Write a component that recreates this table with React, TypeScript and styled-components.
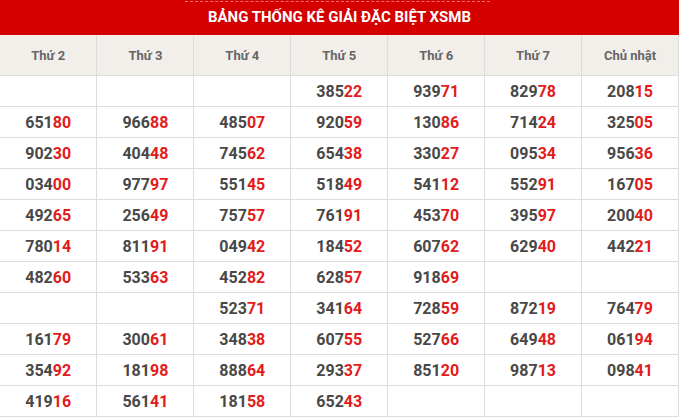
import React from 'react';
import styled, { createGlobalStyle } from 'styled-components';

/* ── page reset ─────────────────────────────────────────── */
const Global = createGlobalStyle`
  html, body { margin: 0; padding: 0; background: #fff; }
  body { font-family: Roboto, 'Liberation Sans', sans-serif; }
`;

/* ── wrappers ──────────────────────────────────────────── */
const Box = styled.section`
  width: 679px;
  background: #fff;
`;

const Title = styled.h2`
  position: relative;
  margin: 0;
  height: 35px;
  line-height: 35px;
  background: #d40000;
  color: #fff;
  font-size: 15px;
  font-weight: 700;
  text-align: center;
  text-transform: uppercase;

  &::before {
    content: '';
    position: absolute;
    top: 1px;
    left: 185px;
    width: 305px;
    border-top: 1px dashed rgba(255, 140, 140, 0.8);
  }
`;

const Table = styled.table`
  width: 679px;
  border-collapse: collapse;
  table-layout: fixed;
`;

const Head = styled.th`
  height: 40px;
  padding: 0;
  background: #f2efea;
  color: #666;
  font-size: 13px;
  font-weight: 700;
  text-align: center;
  border: 1px solid #ddd;
  border-top: 0;
  &:first-child { border-left: 0; }
`;

const Cell = styled.td`
  height: 30px;
  padding: 0;
  text-align: center;
  color: #484848;
  font-size: 16px;
  font-weight: 700;
  border: 1px solid #ddd;
  &:first-child { border-left: 0; }
`;

const Tail = styled.span`
  color: #e31b1b;
`;

/* ── data ──────────────────────────────────────────────── */
const days = ['Thứ 2', 'Thứ 3', 'Thứ 4', 'Thứ 5', 'Thứ 6', 'Thứ 7', 'Chủ nhật'];

const rows: string[][] = [
  ['', '', '', '38522', '93971', '82978', '20815'],
  ['65180', '96688', '48507', '92059', '13086', '71424', '32505'],
  ['90230', '40448', '74562', '65438', '33027', '09534', '95636'],
  ['03400', '97797', '55145', '51849', '54112', '55291', '16705'],
  ['49265', '25649', '75757', '76191', '45370', '39597', '20040'],
  ['78014', '81191', '04942', '18452', '60762', '62940', '44221'],
  ['48260', '53363', '45282', '62857', '91869', '', ''],
  ['', '', '52371', '34164', '72859', '87219', '76479'],
  ['16179', '30061', '34838', '60755', '52766', '64948', '06194'],
  ['35492', '18198', '88864', '29337', '85120', '98713', '09841'],
  ['41916', '56141', '18158', '65243', '', '', ''],
];

const Num: React.FC<{ v: string }> = ({ v }) =>
  v ? (
    <>
      {v.slice(0, 3)}
      <Tail>{v.slice(3)}</Tail>
    </>
  ) : null;

/* ── component ─────────────────────────────────────────── */
const App: React.FC = () => (
  <>
    <Global />
    <Box>
      <Title>Bảng thống kê giải đặc biệt XSMB</Title>
      <Table>
        <thead>
          <tr>
            {days.map((d) => (
              <Head key={d}>{d}</Head>
            ))}
          </tr>
        </thead>
        <tbody>
          {rows.map((r, i) => (
            <tr key={i}>
              {r.map((v, j) => (
                <Cell key={j}>
                  <Num v={v} />
                </Cell>
              ))}
            </tr>
          ))}
        </tbody>
      </Table>
    </Box>
  </>
);

export default App;
